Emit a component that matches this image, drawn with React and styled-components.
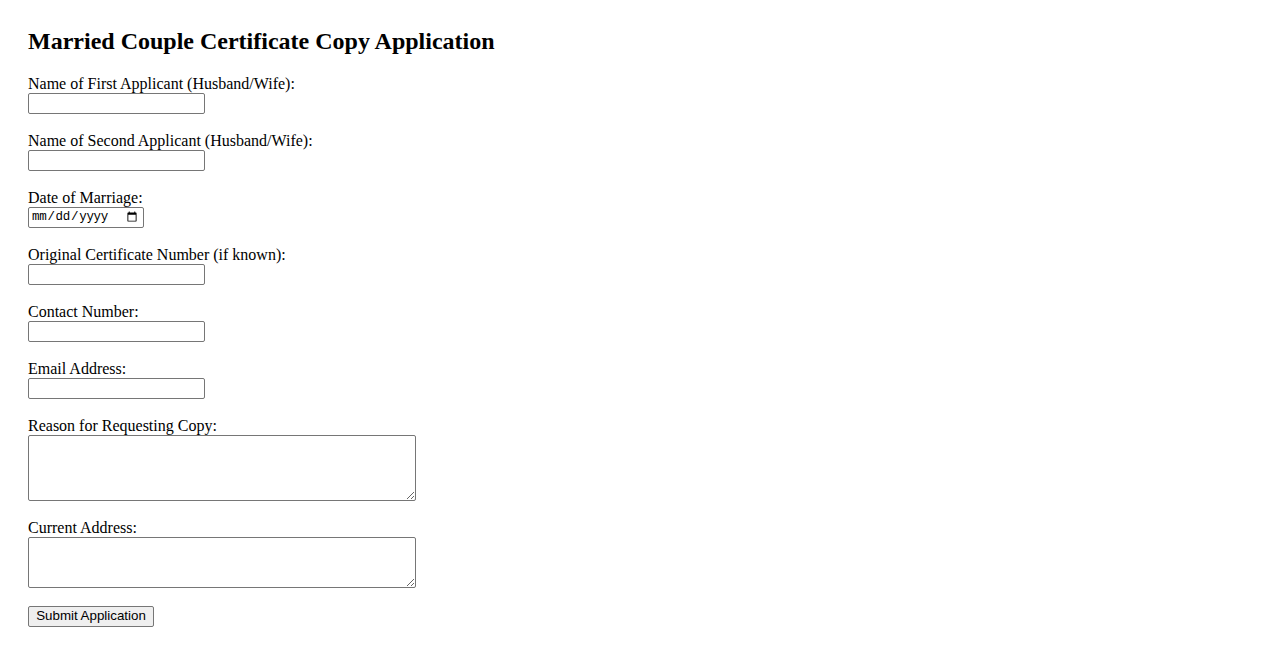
import React from "react";
import styled, { createGlobalStyle } from "styled-components";

const Global = createGlobalStyle`
  html, body { background: #fff; }
  body {
    margin: 8px;
    padding: 20px;
    font-family: "Liberation Serif", "Times New Roman", serif;
    font-size: 16px;
    color: #000;
  }
`;

const Title = styled.h2`
  margin: 0 0 19px;
  font-size: 24px;
  font-weight: bold;
  line-height: 27.6px;
`;

const Form = styled.form`
  display: flex;
  flex-direction: column;
  align-items: flex-start;
`;

const Group = styled.div`
  display: flex;
  flex-direction: column;
  align-items: flex-start;
  margin-bottom: 18px;
`;

const Label = styled.label`
  display: block;
  line-height: 18.4px;
  height: 18px;
`;

const controlBase = `
  box-sizing: border-box;
  border: 1px solid #767676;
  border-radius: 2px;
  background: #fff;
  margin: 0;
  color: #000;
`;

const TextInput = styled.input`
  ${controlBase}
  display: block;
  width: ${(p) => p.$w || 177}px;
  height: 21px;
  padding: 1px 2px;
  font-family: "Liberation Sans", Arial, sans-serif;
  font-size: 13.33px;
`;

const DateInput = styled.input`
  ${controlBase}
  display: block;
  width: 116px;
  height: 21px;
  padding: 0 3px 0 2px;
  font-family: "Liberation Mono", "DejaVu Sans Mono", monospace;
  font-size: 12.5px;
  letter-spacing: -0.3px;
`;

const TextArea = styled.textarea`
  ${controlBase}
  display: block;
  width: 388px;
  height: ${(p) => p.$h}px;
  padding: 2px;
  font-family: "Liberation Mono", monospace;
  font-size: 13.33px;
  resize: both;
`;

const Button = styled.button`
  box-sizing: border-box;
  height: 21px;
  width: 126px;
  padding: 1px 6px;
  margin: 0;
  border: 1px solid #767676;
  border-radius: 2px;
  background: #efefef;
  color: #000;
  font-family: "Liberation Sans", Arial, sans-serif;
  font-size: 13.33px;
  line-height: 16px;
`;

export default function App() {
  return (
    <>
      <Global />
      <Title>Married Couple Certificate Copy Application</Title>
      <Form onSubmit={(e) => e.preventDefault()}>
        <Group>
          <Label htmlFor="a1">Name of First Applicant (Husband/Wife):</Label>
          <TextInput id="a1" type="text" />
        </Group>
        <Group>
          <Label htmlFor="a2">Name of Second Applicant (Husband/Wife):</Label>
          <TextInput id="a2" type="text" />
        </Group>
        <Group>
          <Label htmlFor="dm">Date of Marriage:</Label>
          <DateInput id="dm" type="date" />
        </Group>
        <Group>
          <Label htmlFor="cn">Original Certificate Number (if known):</Label>
          <TextInput id="cn" type="text" />
        </Group>
        <Group>
          <Label htmlFor="ph">Contact Number:</Label>
          <TextInput id="ph" type="tel" />
        </Group>
        <Group>
          <Label htmlFor="em">Email Address:</Label>
          <TextInput id="em" type="email" />
        </Group>
        <Group>
          <Label htmlFor="rs">Reason for Requesting Copy:</Label>
          <TextArea id="rs" $h={66} />
        </Group>
        <Group>
          <Label htmlFor="ad">Current Address:</Label>
          <TextArea id="ad" $h={51} />
        </Group>
        <Button type="submit">Submit Application</Button>
      </Form>
    </>
  );
}
